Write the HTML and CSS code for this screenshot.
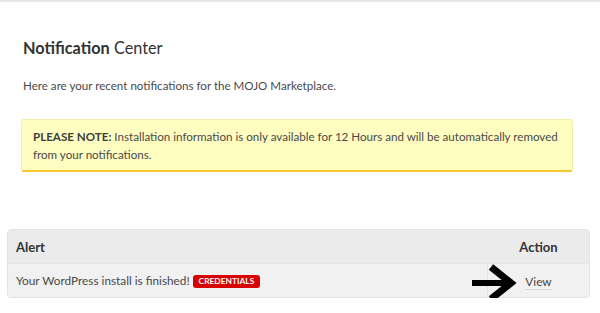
FILE: index.html
```html
<!DOCTYPE html>
<html>
<head>
<meta charset="utf-8">
<link rel="stylesheet" href="styles.css">
</head>
<body>
<div class="page">
  <section class="intro">
    <h1 class="title"><strong>Notification</strong> Center</h1>
    <p class="lead">Here are your recent notifications for the MOJO Marketplace.</p>
    <div class="note"><strong>PLEASE NOTE:</strong> Installation information is only available for 12 Hours and will be automatically removed from your notifications.</div>
  </section>
  <div class="table">
    <div class="row head">
      <div class="cell alert">Alert</div>
      <div class="cell action">Action</div>
    </div>
    <div class="row body">
      <div class="cell alert">Your WordPress install is finished!<span class="badge">CREDENTIALS</span></div>
      <div class="cell action sep"><a class="view" href="#">View</a>
        <svg class="arrow" width="50" height="40" viewBox="0 0 50 40"><path d="M3 21 H38" stroke="#000" stroke-width="6" fill="none"/><path d="M22 5 L42 21 L22 37" stroke="#000" stroke-width="7" fill="none" stroke-linejoin="miter"/></svg>
      </div>
    </div>
  </div>
</div>
</body>
</html>
```
FILE: styles.css
```css
html, body { margin: 0; padding: 0; background: #fff; }
body {
  font-family: "Lato", "Liberation Sans", sans-serif;
  color: #4a4a4a;
  border-top: 2px solid #e6e6e6;
}
.page { padding: 0 10px 0 7px; }
.intro { padding: 34px 17px 0 14px; }
.title {
  margin: 0 0 0 2px;
  font-size: 16.3px;
  line-height: 24px;
  font-weight: 400;
  color: #333;
}
.title strong { font-weight: 700; }
.lead {
  margin: 17px 0 0 2px;
  font-size: 11.6px;
  line-height: 18px;
}
.note {
  margin-top: 24px;
  background: #fffdc0;
  border: 1px solid #f4eea6;
  border-bottom: 2px solid #f6c62a;
  border-radius: 3px;
  padding: 8px 8px 6px 11px;
  font-size: 11.6px;
  line-height: 18px;
  color: #4a4a4a;
}
.note strong { font-weight: 700; color: #3d3d3d; }
.table {
  margin-top: 57px;
  border: 1px solid #e2e2e2;
  border-radius: 4px;
}
.row { display: flex; }
.row.head { background: #ebebeb; height: 33px; border-bottom: 1px solid #e4e4e4; border-radius: 4px 4px 0 0; }
.row.body { background: #f1f1f1; height: 33px; border-radius: 0 0 4px 4px; }
.cell { display: flex; align-items: center; font-size: 11.8px; }
.cell.alert { flex: 1; padding-left: 8px; }
.cell.action { width: 101px; justify-content: center; position: relative; }
.head .cell { font-weight: 700; color: #333; font-size: 13px; }
.head .cell.action { padding-left: 1px; }
.cell.sep { border-left: 1px solid #e2e2e2; }
.badge {
  display: inline-block;
  margin-left: 3px;
  background: #d90000;
  color: #fff;
  font-size: 8.4px;
  font-weight: 700;
  line-height: 13px;
  padding: 0 6px;
  border-radius: 3px;
  margin-top: 1px;
}
.view {
  color: #444;
  text-decoration: none;
  border-bottom: 1px solid #d8d8d8;
  line-height: 14px;
  margin-top: 4px;
}
.arrow { position: absolute; left: -19px; top: -2px; }
```
